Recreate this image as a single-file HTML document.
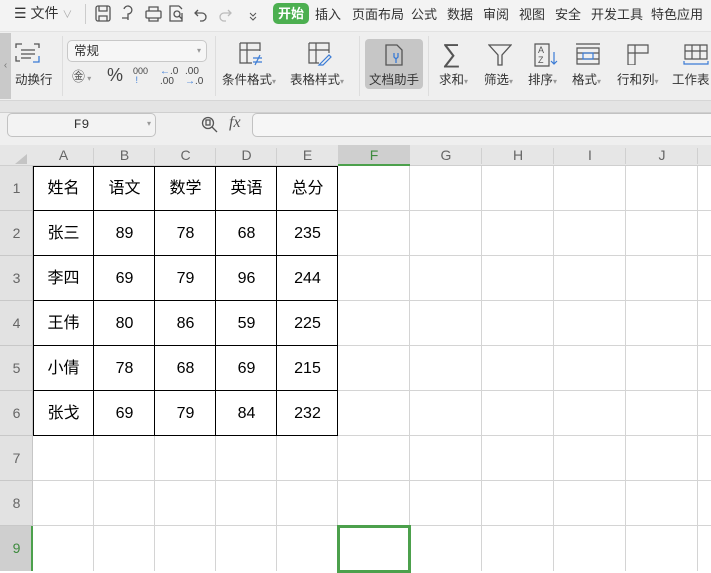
<!DOCTYPE html>
<html><head><meta charset="utf-8"><style>
*{margin:0;padding:0;box-sizing:border-box}
body{width:711px;height:571px;overflow:hidden;background:#fff;font-family:"Liberation Sans","Noto Sans CJK SC",sans-serif;position:relative;color:#333}
.a{position:absolute}
.t{font-size:13px;top:4px}
.rb{font-size:12.5px;top:69px;color:#333}
.hl{position:absolute;height:1px;background:#d4d4d4}
.vl{position:absolute;width:1px;background:#d4d4d4}
.bh{position:absolute;height:1px;background:#000}
.bv{position:absolute;width:1px;background:#000}
.ch{position:absolute;top:145px;height:21px;font-size:14px;color:#666;text-align:center;line-height:21px}
.rh{position:absolute;left:0;width:33px;font-size:14px;color:#666;text-align:center;line-height:45px;height:45px}
.c{position:absolute;width:61px;height:45px;line-height:45px;text-align:center;font-size:16px;color:#000}
</style></head><body>
<div class="a" style="left:0;top:0;width:711px;height:31px;background:#f3f3f3"></div>
<div class="a t" style="left:14px;font-size:14px;top:3px">☰ 文件 <span style="color:#aaa;font-size:10px">∨</span></div>
<div class="a" style="left:85px;top:4px;width:1px;height:20px;background:#ccc"></div>
<svg class="a" style="left:94px;top:4px" width="170" height="20" fill="none" stroke="#555" stroke-width="1.3">
<rect x="2" y="2" width="14" height="15" rx="2"/><path d="M5 2v5h8V2M5 17v-5h8v5"/>
<path d="M30 5a4 4 0 1 1 4 5v6M28 14h6"/>
<rect x="52" y="7" width="15" height="7" rx="1"/><path d="M55 7V3h9v4M55 14v3h9v-3"/>
<path d="M85 2h-9v15h12V9M85 2l3 3"/><circle cx="83" cy="10" r="3"/><path d="M85 12l3 3"/>
<path d="M104 6l-3 3 3 3M101 9h7a4 4 0 0 1 0 8h-2"/>
<path d="M134 6l3 3-3 3M137 9h-7a4 4 0 0 0 0 8h2" stroke="#bbb"/>
<path d="M156 9l3 3 3-3M156 13l3 3 3-3" stroke-width="1"/>
</svg>
<div class="a" style="left:273px;top:3px;width:36px;height:21px;background:#4caf50;border-radius:5px;color:#fff;font-size:13px;font-weight:bold;text-align:center;line-height:21px">开始</div>
<div class="a t" style="left:315px">插入</div>
<div class="a t" style="left:352px">页面布局</div>
<div class="a t" style="left:411px">公式</div>
<div class="a t" style="left:447px">数据</div>
<div class="a t" style="left:483px">审阅</div>
<div class="a t" style="left:519px">视图</div>
<div class="a t" style="left:555px">安全</div>
<div class="a t" style="left:591px">开发工具</div>
<div class="a t" style="left:651px">特色应用</div>
<div class="a" style="left:0;top:31px;width:711px;height:69px;background:#efefef;border-top:1px solid #e2e2e2"></div>
<div class="a" style="left:0;top:33px;width:11px;height:66px;background:#c9c9c9;color:#777;font-size:10px;line-height:66px;text-align:center">‹</div>
<svg class="a" style="left:15px;top:42px" width="26" height="24" fill="none" stroke="#555" stroke-width="1.3"><path d="M1 6V2h6M1 14v5h4M19 2h5v4"/><path d="M6 8h14M6 12h14M6 16h10"/><path d="M24 14v6h-6" stroke="#3a7bd5"/></svg>
<div class="a rb" style="left:15px">动换行</div>
<div class="a" style="left:62px;top:36px;width:1px;height:60px;background:#ddd"></div>
<div class="a" style="left:67px;top:40px;width:140px;height:22px;border:1px solid #c8c8c8;border-radius:5px;background:#f6f6f6;font-size:12.5px;padding-left:6px;line-height:20px">常规<span style="position:absolute;right:5px;color:#999;font-size:8px">▾</span></div>
<div class="a" style="left:72px;top:66px;font-size:13px;color:#555">㊎<span style="font-size:8px;color:#999"> ▾</span></div>
<div class="a" style="left:107px;top:65px;font-size:18px;color:#444">%</div>
<div class="a" style="left:133px;top:67px;font-size:9px;color:#444;line-height:9px">000<br><span style="color:#3a7bd5">&nbsp;!</span></div>
<div class="a" style="left:160px;top:67px;font-size:10px;color:#444;line-height:10px"><span style="color:#3a7bd5">←</span>.0<br>.00</div>
<div class="a" style="left:185px;top:67px;font-size:10px;color:#444;line-height:10px">.00<br><span style="color:#3a7bd5">→</span>.0</div>
<div class="a" style="left:215px;top:36px;width:1px;height:60px;background:#ddd"></div>
<svg class="a" style="left:238px;top:41px" width="26" height="26" fill="none" stroke="#555" stroke-width="1.2"><path d="M2 2h20v8M2 2v20h12M2 9h20M9 2v20"/><path d="M15 17h9M15 21h9M22 14l-5 10" stroke="#3a7bd5"/></svg>
<div class="a rb" style="left:222px">条件格式<span style="font-size:8px;color:#999">▾</span></div>
<svg class="a" style="left:307px;top:41px" width="26" height="26" fill="none" stroke="#555" stroke-width="1.2"><path d="M2 2h20v10M2 2v20h10M2 9h20M9 2v20"/><path d="M14 22l8-8 2 2-8 8h-4z" stroke="#3a7bd5"/></svg>
<div class="a rb" style="left:290px">表格样式<span style="font-size:8px;color:#999">▾</span></div>
<div class="a" style="left:359px;top:36px;width:1px;height:60px;background:#ddd"></div>
<div class="a" style="left:365px;top:39px;width:58px;height:50px;background:#c6c6c6;border-radius:4px"></div>
<svg class="a" style="left:384px;top:43px" width="22" height="24" fill="none" stroke="#555" stroke-width="1.3"><path d="M2 2h11l5 5v15H2z"/><path d="M10 10v4l2 2 2-2v-4M12 16v4" stroke="#3a7bd5"/></svg>
<div class="a rb" style="left:369px">文档助手</div>
<div class="a" style="left:428px;top:36px;width:1px;height:60px;background:#ddd"></div>
<div class="a" style="left:442px;top:38px;font-size:26px;color:#555">∑</div>
<div class="a rb" style="left:439px">求和<span style="font-size:8px;color:#999">▾</span></div>
<svg class="a" style="left:488px;top:43px" width="24" height="24" fill="none" stroke="#555" stroke-width="1.3"><path d="M1 2h22l-9 10v10h-4V12z"/></svg>
<div class="a rb" style="left:484px">筛选<span style="font-size:8px;color:#999">▾</span></div>
<svg class="a" style="left:533px;top:42px" width="26" height="26" fill="none" stroke="#555" stroke-width="1.2"><path d="M2 2h14v22H2z"/><text x="5" y="11" font-size="9" fill="#555" stroke="none" font-family="Liberation Sans">A</text><text x="5" y="21" font-size="9" fill="#555" stroke="none" font-family="Liberation Sans">Z</text><path d="M21 10v12M18 19l3 3 3-3" stroke="#3a7bd5"/></svg>
<div class="a rb" style="left:528px">排序<span style="font-size:8px;color:#999">▾</span></div>
<svg class="a" style="left:575px;top:43px" width="26" height="22" fill="none" stroke="#555" stroke-width="1.2"><path d="M1 1h24M2 5h22v16H2zM2 10h22M2 16h22"/><rect x="8" y="10" width="10" height="6" stroke="#3a7bd5"/></svg>
<div class="a rb" style="left:572px">格式<span style="font-size:8px;color:#999">▾</span></div>
<svg class="a" style="left:626px;top:43px" width="24" height="22" fill="none" stroke="#555" stroke-width="1.2"><path d="M2 2h20v8H9v12H2zM2 10h7M9 2v8"/></svg>
<div class="a rb" style="left:617px">行和列<span style="font-size:8px;color:#999">▾</span></div>
<svg class="a" style="left:683px;top:43px" width="26" height="22" fill="none" stroke="#555" stroke-width="1.2"><path d="M2 2h22v14H2zM2 8h22M9 2v14M17 2v14"/><path d="M1 18v3h24v-3" stroke="#3a7bd5"/></svg>
<div class="a rb" style="left:672px">工作表</div>
<div class="a" style="left:0;top:100px;width:711px;height:12px;background:#e4e4e4;border-top:1px solid #d6d6d6"></div>
<div class="a" style="left:0;top:112px;width:711px;height:33px;background:#efefef;border-top:1px solid #cfcfcf"></div>
<div class="a" style="left:7px;top:113px;width:149px;height:24px;border:1px solid #c2c2c2;border-radius:5px;background:#f3f3f3;font-family:'Liberation Mono',monospace;font-size:13px;text-align:center;line-height:22px;color:#333">F9<span style="position:absolute;right:4px;color:#999;font-size:8px">▾</span></div>
<svg class="a" style="left:201px;top:116px" width="18" height="18" fill="none" stroke="#555" stroke-width="1.3"><circle cx="7" cy="7" r="5.5"/><path d="M11 11l5 5"/><rect x="5" y="4" width="4" height="5"/></svg>
<div class="a" style="left:229px;top:114px;font-family:'Liberation Serif',serif;font-style:italic;font-size:16px;color:#555">fx</div>
<div class="a" style="left:252px;top:113px;width:470px;height:24px;border:1px solid #c2c2c2;border-radius:5px;background:#f6f6f6"></div>
<div class="a" style="left:0;top:145px;width:711px;height:21px;background:#e6e6e6;border-bottom:1px solid #cfcfcf"></div>
<div class="a" style="left:0;top:166px;width:33px;height:405px;background:#e2e2e2;border-right:1px solid #c6c6c6"></div>
<div class="a" style="left:15px;top:154px;width:0;height:0;border-left:12px solid transparent;border-bottom:10px solid #c4c4c4"></div>
<div class="a" style="left:338px;top:145px;width:72px;height:21px;background:#cfcfcf;border-bottom:2px solid #4ca04c"></div>
<div class="a" style="left:0;top:526px;width:33px;height:45px;background:#cfcfcf;border-right:2px solid #4ca04c"></div>
<div class="ch" style="left:33px;width:61px">A</div>
<div class="ch" style="left:94px;width:61px">B</div>
<div class="ch" style="left:155px;width:61px">C</div>
<div class="ch" style="left:216px;width:61px">D</div>
<div class="ch" style="left:277px;width:61px">E</div>
<div class="ch" style="left:338px;width:72px;color:#3d8a3d">F</div>
<div class="ch" style="left:410px;width:72px">G</div>
<div class="ch" style="left:482px;width:72px">H</div>
<div class="ch" style="left:554px;width:72px">I</div>
<div class="ch" style="left:626px;width:72px">J</div>
<div class="a" style="left:93px;top:148px;width:1px;height:16px;background:#d0d0d0"></div>
<div class="a" style="left:154px;top:148px;width:1px;height:16px;background:#d0d0d0"></div>
<div class="a" style="left:215px;top:148px;width:1px;height:16px;background:#d0d0d0"></div>
<div class="a" style="left:276px;top:148px;width:1px;height:16px;background:#d0d0d0"></div>
<div class="a" style="left:481px;top:148px;width:1px;height:16px;background:#d0d0d0"></div>
<div class="a" style="left:553px;top:148px;width:1px;height:16px;background:#d0d0d0"></div>
<div class="a" style="left:625px;top:148px;width:1px;height:16px;background:#d0d0d0"></div>
<div class="a" style="left:697px;top:148px;width:1px;height:16px;background:#d0d0d0"></div>
<div class="rh" style="top:166px">1</div>
<div class="rh" style="top:211px">2</div>
<div class="rh" style="top:256px">3</div>
<div class="rh" style="top:301px">4</div>
<div class="rh" style="top:346px">5</div>
<div class="rh" style="top:391px">6</div>
<div class="rh" style="top:436px">7</div>
<div class="rh" style="top:481px">8</div>
<div class="rh" style="top:526px;color:#3d8a3d">9</div>
<div class="a" style="left:0;top:210px;width:33px;height:1px;background:#c8c8c8"></div>
<div class="a" style="left:0;top:255px;width:33px;height:1px;background:#c8c8c8"></div>
<div class="a" style="left:0;top:300px;width:33px;height:1px;background:#c8c8c8"></div>
<div class="a" style="left:0;top:345px;width:33px;height:1px;background:#c8c8c8"></div>
<div class="a" style="left:0;top:390px;width:33px;height:1px;background:#c8c8c8"></div>
<div class="a" style="left:0;top:435px;width:33px;height:1px;background:#c8c8c8"></div>
<div class="a" style="left:0;top:480px;width:33px;height:1px;background:#c8c8c8"></div>
<div class="a" style="left:0;top:525px;width:33px;height:1px;background:#c8c8c8"></div>
<div class="hl" style="left:33px;width:678px;top:210px"></div>
<div class="hl" style="left:33px;width:678px;top:255px"></div>
<div class="hl" style="left:33px;width:678px;top:300px"></div>
<div class="hl" style="left:33px;width:678px;top:345px"></div>
<div class="hl" style="left:33px;width:678px;top:390px"></div>
<div class="hl" style="left:33px;width:678px;top:435px"></div>
<div class="hl" style="left:33px;width:678px;top:480px"></div>
<div class="hl" style="left:33px;width:678px;top:525px"></div>
<div class="vl" style="top:166px;height:405px;left:93px"></div>
<div class="vl" style="top:166px;height:405px;left:154px"></div>
<div class="vl" style="top:166px;height:405px;left:215px"></div>
<div class="vl" style="top:166px;height:405px;left:276px"></div>
<div class="vl" style="top:166px;height:405px;left:337px"></div>
<div class="vl" style="top:166px;height:405px;left:409px"></div>
<div class="vl" style="top:166px;height:405px;left:481px"></div>
<div class="vl" style="top:166px;height:405px;left:553px"></div>
<div class="vl" style="top:166px;height:405px;left:625px"></div>
<div class="vl" style="top:166px;height:405px;left:697px"></div>
<div class="bh" style="left:33px;width:305px;top:166px"></div>
<div class="bh" style="left:33px;width:305px;top:210px"></div>
<div class="bh" style="left:33px;width:305px;top:255px"></div>
<div class="bh" style="left:33px;width:305px;top:300px"></div>
<div class="bh" style="left:33px;width:305px;top:345px"></div>
<div class="bh" style="left:33px;width:305px;top:390px"></div>
<div class="bh" style="left:33px;width:305px;top:435px"></div>
<div class="bv" style="top:166px;height:270px;left:33px"></div>
<div class="bv" style="top:166px;height:270px;left:93px"></div>
<div class="bv" style="top:166px;height:270px;left:154px"></div>
<div class="bv" style="top:166px;height:270px;left:215px"></div>
<div class="bv" style="top:166px;height:270px;left:276px"></div>
<div class="bv" style="top:166px;height:270px;left:337px"></div>
<div class="c" style="left:33px;top:166px">姓名</div><div class="c" style="left:94px;top:166px">语文</div><div class="c" style="left:155px;top:166px">数学</div><div class="c" style="left:216px;top:166px">英语</div><div class="c" style="left:277px;top:166px">总分</div>
<div class="c" style="left:33px;top:211px">张三</div><div class="c" style="left:94px;top:211px">89</div><div class="c" style="left:155px;top:211px">78</div><div class="c" style="left:216px;top:211px">68</div><div class="c" style="left:277px;top:211px">235</div>
<div class="c" style="left:33px;top:256px">李四</div><div class="c" style="left:94px;top:256px">69</div><div class="c" style="left:155px;top:256px">79</div><div class="c" style="left:216px;top:256px">96</div><div class="c" style="left:277px;top:256px">244</div>
<div class="c" style="left:33px;top:301px">王伟</div><div class="c" style="left:94px;top:301px">80</div><div class="c" style="left:155px;top:301px">86</div><div class="c" style="left:216px;top:301px">59</div><div class="c" style="left:277px;top:301px">225</div>
<div class="c" style="left:33px;top:346px">小倩</div><div class="c" style="left:94px;top:346px">78</div><div class="c" style="left:155px;top:346px">68</div><div class="c" style="left:216px;top:346px">69</div><div class="c" style="left:277px;top:346px">215</div>
<div class="c" style="left:33px;top:391px">张戈</div><div class="c" style="left:94px;top:391px">69</div><div class="c" style="left:155px;top:391px">79</div><div class="c" style="left:216px;top:391px">84</div><div class="c" style="left:277px;top:391px">232</div>
<div class="a" style="left:337px;top:525px;width:74px;height:48px;border:3px solid #4ca04c"></div>
</body></html>
